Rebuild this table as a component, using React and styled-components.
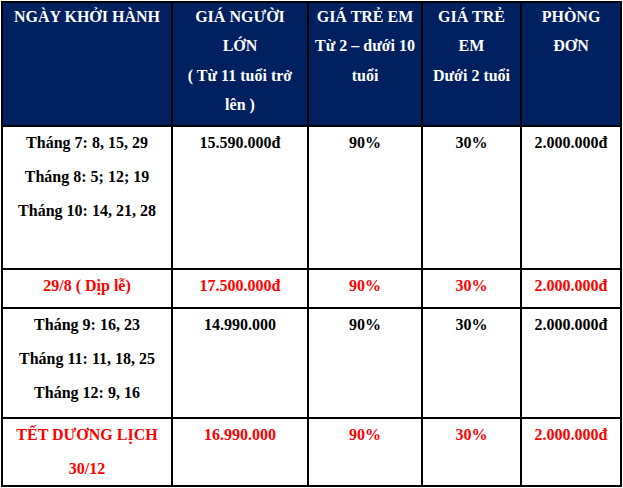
import React from "react";
import styled, { createGlobalStyle } from "styled-components";

const Global = createGlobalStyle`
  html, body { margin: 0; padding: 0; background: #ffffff; }
  body { font-family: "Liberation Serif", "Times New Roman", serif; }
`;

const Page = styled.div`
  padding: 1px 0 0 1px;
`;

const Table = styled.div`
  display: grid;
  grid-template-columns: 168px 134px 112px 97px 98px;
  grid-template-rows: 122px 141px 37px 108px 66px;
  gap: 2px;
  padding: 2px;
  background: #000000;
  width: max-content;
`;

const Cell = styled.div`
  display: flex;
  flex-direction: column;
  align-items: center;
  gap: ${(p) => (p.$head ? "0" : "4.5px")};
  padding-top: ${(p) => (p.$head ? "0" : "1px")};
  text-align: center;
  background: ${(p) => (p.$head ? "#002060" : "#ffffff")};
  color: ${(p) => (p.$head ? "#ffffff" : p.$red ? "#ff0000" : "#000000")};
  font-family: "Liberation Serif", "Times New Roman", serif;
  font-weight: bold;
  font-size: 16px;
  overflow: hidden;

  & > span:first-child {
    margin-top: ${(p) => (p.$head ? "-1px" : "0")};
  }
`;

const Line = styled.span`
  display: block;
  line-height: ${(p) => (p.$head ? "29.3px" : "29.5px")};
  white-space: nowrap;
`;

const header = [
  ["NGÀY KHỞI HÀNH"],
  ["GIÁ NGƯỜI", "LỚN", "( Từ 11 tuổi trở", "lên )"],
  ["GIÁ TRẺ EM", "Từ 2 – dưới 10", "tuổi"],
  ["GIÁ TRẺ", "EM", "Dưới 2 tuổi"],
  ["PHÒNG", "ĐƠN"],
];

const rows = [
  {
    red: false,
    cells: [
      ["Tháng 7: 8, 15, 29", "Tháng 8: 5; 12; 19", "Tháng 10: 14, 21, 28"],
      ["15.590.000đ"],
      ["90%"],
      ["30%"],
      ["2.000.000đ"],
    ],
  },
  {
    red: true,
    cells: [["29/8 ( Dịp lễ)"], ["17.500.000đ"], ["90%"], ["30%"], ["2.000.000đ"]],
  },
  {
    red: false,
    cells: [
      ["Tháng 9: 16, 23", "Tháng 11: 11, 18, 25", "Tháng 12: 9, 16"],
      ["14.990.000"],
      ["90%"],
      ["30%"],
      ["2.000.000đ"],
    ],
  },
  {
    red: true,
    cells: [
      ["TẾT DƯƠNG LỊCH", "30/12"],
      ["16.990.000"],
      ["90%"],
      ["30%"],
      ["2.000.000đ"],
    ],
  },
];

export default function App() {
  return (
    <>
      <Global />
      <Page>
        <Table>
          {header.map((lines, i) => (
            <Cell key={"h" + i} $head>
              {lines.map((t, j) => (
                <Line key={j} $head>
                  {t}
                </Line>
              ))}
            </Cell>
          ))}
          {rows.map((row, r) =>
            row.cells.map((lines, c) => (
              <Cell key={r + "-" + c} $red={row.red}>
                {lines.map((t, j) => (
                  <Line key={j}>{t}</Line>
                ))}
              </Cell>
            ))
          )}
        </Table>
      </Page>
    </>
  );
}
